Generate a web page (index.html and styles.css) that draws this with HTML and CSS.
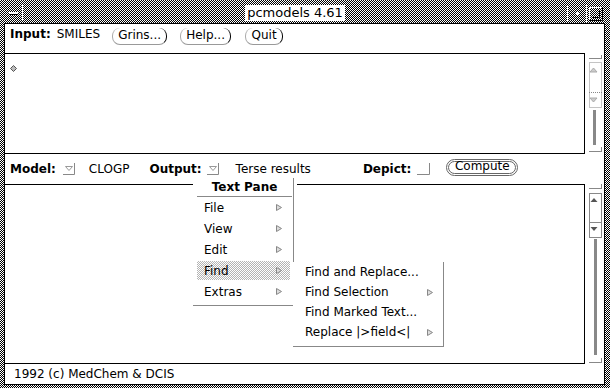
FILE: index.html
```html
<!DOCTYPE html>
<html>
<head>
  <title>pcmodels 4.61</title>
  <meta name="viewport" content="width=device-width, initial-scale=1">
  <link rel="stylesheet" href="styles.css">
</head>
<body>
  <div class="window">
    <div class="titlebar">
      <div class="wm-menu"><i></i></div>
      <div class="title-area"><span class="title">pcmodels 4.61</span></div>
      <div class="wm-btn">
        <svg width="5" height="5" viewBox="0 0 5 5"><path d="M2.5 0 V5 M0 2.5 H5" stroke="#fff" stroke-width="1"/></svg>
      </div>
      <div class="wm-btn">
        <svg width="14" height="14" viewBox="0 0 14 14">
          <path d="M0.5 13 V0.5 H13" stroke="#fff" fill="none"/>
          <path d="M0.5 13.5 H13.5 V0.5" stroke="#000" fill="none"/>
          <path d="M3 10.5 H10.5 V3" stroke="#000" fill="none"/>
        </svg>
      </div>
    </div>

    <div class="client">
      <div class="controls row-input">
        <span class="lbl">Input:</span>
        <span class="smiles">SMILES</span>
        <span class="btn grins">Grins...</span>
        <span class="btn help">Help...</span>
        <span class="btn quit">Quit</span>
      </div>

      <div class="pane pane-input">
        <div class="textbox">
          <svg class="caret" width="7" height="7" viewBox="0 0 7 7"><path d="M3.5 0.5 L6.5 3.5 L3.5 6.5 L0.5 3.5 Z" fill="#bbb" stroke="#555"/></svg>
        </div>
        <svg class="scroll" width="19" height="101" viewBox="0 0 19 101">
          <path d="M4 5.5 H17 M16.5 2 V6" stroke="#888" fill="none"/>
          <rect x="4.5" y="9.5" width="12" height="45" stroke="#888" stroke-dasharray="1 1" fill="none"/>
          <path d="M4 39.5 H17" stroke="#888" stroke-dasharray="1 1"/>
          <polygon points="5,19 8.5,15 12,19" fill="#ccc" stroke="#aaa"/>
          <polygon points="5,45 12,45 8.5,49" fill="#ccc" stroke="#aaa"/>
          <rect x="8" y="57" width="3" height="35" fill="#888"/>
          <path d="M4 98.5 H17 M16.5 94 V99" stroke="#888" fill="none"/>
        </svg>
      </div>

      <div class="controls row-model">
        <span class="lbl">Model:</span>
        <svg class="dd dd-model" width="14" height="12" viewBox="0 0 14 12">
          <polygon points="3.5,3.5 10.5,3.5 7,7.5" fill="none" stroke="#999"/>
          <path d="M12.5 0 V11.5 H1" stroke="#888" fill="none"/>
        </svg>
        <span class="clogp">CLOGP</span>
        <span class="lbl output">Output:</span>
        <svg class="dd dd-output" width="14" height="12" viewBox="0 0 14 12">
          <polygon points="3.5,3.5 10.5,3.5 7,7.5" fill="none" stroke="#999"/>
          <path d="M12.5 0 V11.5 H1" stroke="#888" fill="none"/>
        </svg>
        <span class="terse">Terse results</span>
        <span class="lbl depict">Depict:</span>
        <svg class="check" width="14" height="12" viewBox="0 0 14 12">
          <path d="M12.5 0 V11.5 H0" stroke="#888" fill="none"/>
        </svg>
        <span class="compute">Compute</span>
      </div>

      <div class="pane pane-output">
        <div class="textbox"></div>
        <svg class="scroll" width="19" height="180" viewBox="0 0 19 180">
          <path d="M4 4.5 H17 M16.5 0 V5" stroke="#888" fill="none"/>
          <rect x="4.5" y="9.5" width="12" height="44" stroke="#888" fill="none"/>
          <path d="M4 38.5 H17" stroke="#888"/>
          <polygon points="5.5,18 9,14 12.5,18" fill="#555"/>
          <polygon points="5.5,43 12.5,43 9,47" fill="#555"/>
          <rect x="9" y="55" width="3" height="116" fill="#888"/>
          <path d="M4 178.5 H17 M16.5 174 V179" stroke="#888" fill="none"/>
        </svg>
      </div>

      <div class="footer">1992 (c) MedChem &amp; DCIS</div>

      <div class="menu">
        <div class="menu-title">Text Pane</div>
        <div class="item">File<svg class="arrow" width="6" height="7" viewBox="0 0 6 7"><polygon points="0.5,0.5 5.5,3.5 0.5,6.5" fill="#ddd" stroke="#888"/></svg></div>
        <div class="item">View<svg class="arrow" width="6" height="7" viewBox="0 0 6 7"><polygon points="0.5,0.5 5.5,3.5 0.5,6.5" fill="#ddd" stroke="#888"/></svg></div>
        <div class="item">Edit<svg class="arrow" width="6" height="7" viewBox="0 0 6 7"><polygon points="0.5,0.5 5.5,3.5 0.5,6.5" fill="#ddd" stroke="#888"/></svg></div>
        <div class="item active">Find<svg class="arrow" width="6" height="7" viewBox="0 0 6 7"><polygon points="0.5,0.5 5.5,3.5 0.5,6.5" fill="#ddd" stroke="#888"/></svg></div>
        <div class="item">Extras<svg class="arrow" width="6" height="7" viewBox="0 0 6 7"><polygon points="0.5,0.5 5.5,3.5 0.5,6.5" fill="#ddd" stroke="#888"/></svg></div>
      </div>

      <div class="submenu">
        <div class="sub-item">Find and Replace...</div>
        <div class="sub-item">Find Selection<svg class="arrow" width="6" height="7" viewBox="0 0 6 7"><polygon points="0.5,0.5 5.5,3.5 0.5,6.5" fill="#ddd" stroke="#888"/></svg></div>
        <div class="sub-item">Find Marked Text...</div>
        <div class="sub-item">Replace |&gt;field&lt;|<svg class="arrow" width="6" height="7" viewBox="0 0 6 7"><polygon points="0.5,0.5 5.5,3.5 0.5,6.5" fill="#ddd" stroke="#888"/></svg></div>
      </div>
    </div>
  </div>
</body>
</html>
```

FILE: styles.css
```css
* { box-sizing: border-box; }
body { margin: 0; font-family: "DejaVu Sans", sans-serif; font-size: 12px; color: #000; }
svg { display: block; }

.window { width: 610px; height: 388px; display: flex; flex-direction: column; background: repeating-conic-gradient(#000 0 25%, #fff 0 50%) 0 0 / 2px 2px; }

.titlebar { height: 23px; display: flex; align-items: flex-start; padding: 5px 5px 0 5px; }
.wm-menu { width: 18px; height: 16px; border-right: 1px solid #fff; display: flex; align-items: center; justify-content: center; }
.wm-menu i { width: 9px; height: 3px; background: #fff; border-bottom: 1px solid #000; margin-top: 1px; }
.title-area { flex: 1; display: flex; justify-content: center; }
.title { background: #fff; font-size: 13px; line-height: 16px; padding: 0 2px; }
.wm-btn { width: 19px; height: 17px; border-left: 1px solid #fff; display: flex; align-items: center; justify-content: center; }

.client { flex: 1; margin: 0 5px 3px 4px; background: #fff; border: 1px solid #000; display: flex; flex-direction: column; position: relative; }

.controls { display: flex; align-items: flex-start; padding-left: 5px; line-height: 14px; }
.row-input { height: 29px; padding-top: 3px; }
.row-model { height: 30px; padding-top: 8px; }
.lbl { font-weight: bold; }
.smiles { margin-left: 6px; }

.btn { margin-top: 1px; height: 17px; text-align: center; border: 1px solid; border-top-width: 0; border-color: transparent #000 #999 #aaa; border-radius: 8px; }
.grins { margin-left: 12px; width: 55px; }
.help { margin-left: 13px; width: 51px; }
.quit { margin-left: 14px; width: 38px; }

.pane { display: flex; }
.pane-input { height: 101px; }
.pane-output { height: 180px; }
.textbox { width: 580px; border: 1px solid #000; border-left: none; }
.caret { margin: 11px 0 0 5px; }

.dd { margin-top: 1px; }
.dd-model { margin-left: 6px; }
.clogp { margin-left: 13px; }
.output { margin-left: 20px; }
.dd-output { margin-left: 4px; }
.terse { margin-left: 16px; }
.depict { margin-left: 52px; }
.check { margin-left: 6px; margin-top: 1px; }
.compute { margin-left: 15px; margin-top: -3px; width: 72px; height: 17px; border: 3px double #666; border-radius: 9px; text-align: center; line-height: 9px; padding-bottom: 2px; }

.footer { flex: 1; padding-left: 9px; line-height: 20px; }

.menu { position: absolute; left: 188px; top: 154px; width: 101px; background: #fff; border-right: 1px solid #888; border-bottom: 1px solid #888; padding-bottom: 3px; box-shadow: 3px 0 0 #fff; }
.menu-title { height: 19px; margin: 0 1px 0 4px; border-bottom: 1px solid #888; font-weight: bold; text-align: center; line-height: 18px; }
.item { height: 21px; display: flex; align-items: center; justify-content: space-between; margin: 0 3px 0 4px; padding: 0 8px 0 7px; border-top: 1px solid transparent; border-bottom: 1px solid transparent; background-clip: padding-box; }
.item.active { background-image: repeating-conic-gradient(#b4b4b4 0 25%, #fff 0 50%); background-size: 2px 2px; }

.submenu { position: absolute; left: 288px; top: 238px; width: 151px; background: #fff; border-right: 1px solid #888; border-bottom: 1px solid #888; padding-bottom: 4px; }
.sub-item { height: 20px; display: flex; align-items: center; justify-content: space-between; padding: 0 10px 0 12px; }
```
